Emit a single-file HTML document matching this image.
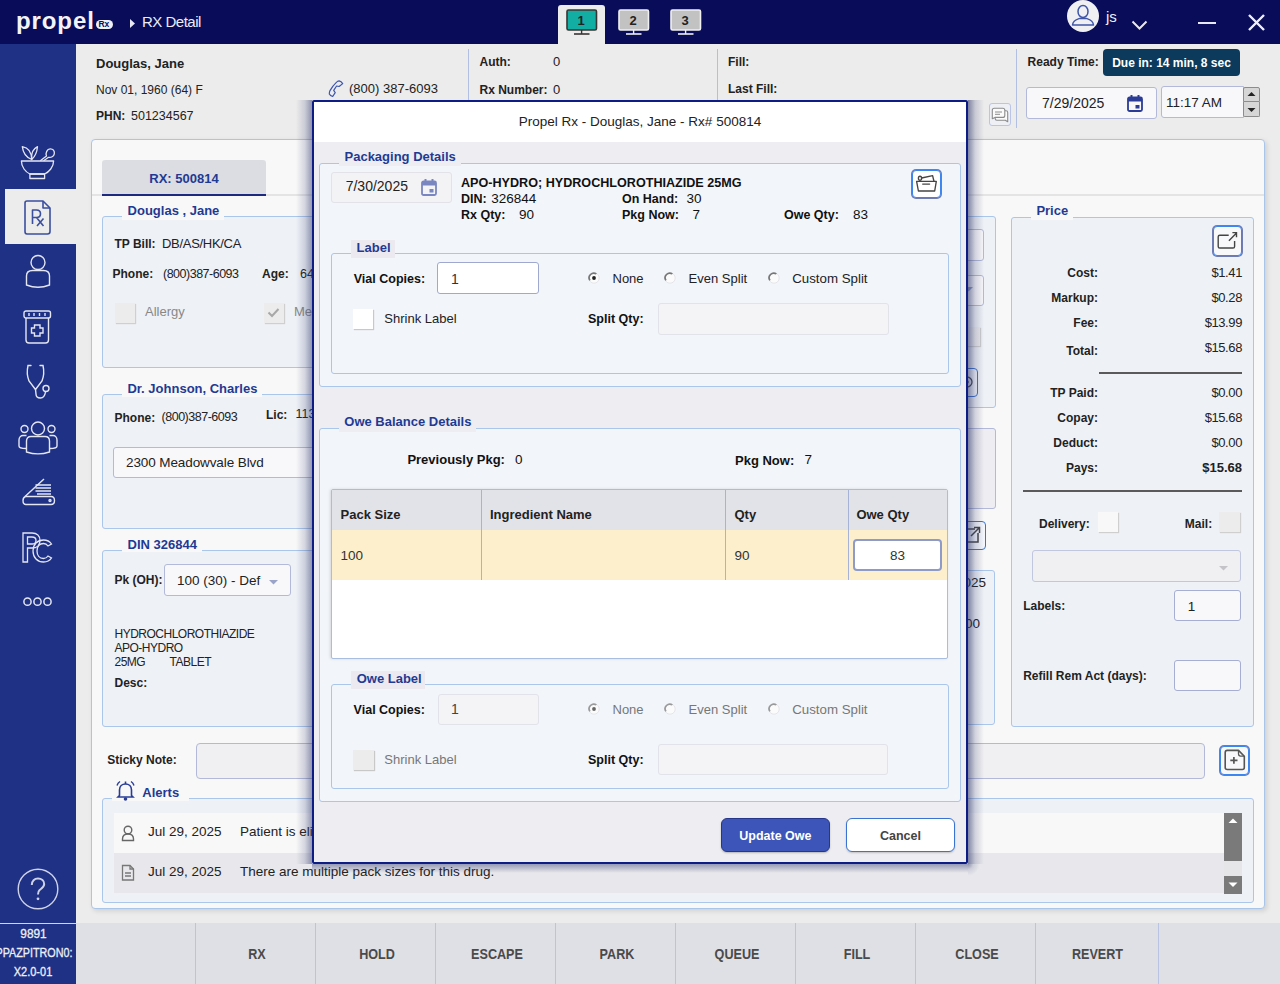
<!DOCTYPE html>
<html><head><meta charset="utf-8">
<style>
*{box-sizing:border-box;margin:0;padding:0}
html,body{width:1280px;height:984px;overflow:hidden;background:#ececec;font-family:"Liberation Sans",sans-serif;color:#222;font-size:13px;position:relative}
.a{position:absolute}
.t{position:absolute;white-space:nowrap;line-height:1}
svg{overflow:visible}
</style></head><body>
<div class="a" style="left:0px;top:0px;width:1280px;height:44px;background:#080c59"></div>
<div class="t" style="left:16px;top:8.5px;font-size:24px;font-weight:700;color:#f4f4f8;letter-spacing:0.9px;">propel</div>
<div class="a" style="left:96px;top:19.5px;width:17px;height:9.5px;background:#f0f0f4;border-radius:5px"></div>
<div class="t" style="left:98.5px;top:20.25px;font-size:8.5px;font-weight:700;color:#080c59;letter-spacing:-0.2px;">Rx</div>
<svg class="a" style="left:130px;top:19px;" width="6" height="9" viewBox="0 0 6 9"><path d="M0 0 L5 4.5 L0 9Z" fill="#e8e8f0"/></svg>
<div class="t" style="left:142px;top:14.2px;font-size:15px;color:#ececf2;letter-spacing:-0.5px;">RX Detail</div>
<div class="a" style="left:558px;top:5px;width:47px;height:39px;background:#ececec;border-radius:3px 3px 0 0"></div>
<svg class="a" style="left:566px;top:9px;" width="32" height="26" viewBox="0 0 32 26"><rect x="1" y="1" width="29.5" height="20" rx="1.5" fill="#12aea3" stroke="#3a3434" stroke-width="1.6"/><line x1="15.6" y1="21" x2="15.6" y2="25" stroke="#3a3434" stroke-width="1.4"/><line x1="8" y1="25" x2="23.5" y2="25" stroke="#3a3434" stroke-width="1.6"/></svg>
<div class="t" style="left:577.5px;top:13.5px;font-size:13px;font-weight:700;">1</div>
<svg class="a" style="left:618px;top:9px;" width="32" height="26" viewBox="0 0 32 26"><rect x="1" y="1" width="29.5" height="20" rx="1.5" fill="#c2c2c2" stroke="#f0f0f0" stroke-width="1.6"/><line x1="15.6" y1="21" x2="15.6" y2="25" stroke="#f0f0f0" stroke-width="1.4"/><line x1="8" y1="25" x2="23.5" y2="25" stroke="#f0f0f0" stroke-width="1.6"/></svg>
<div class="t" style="left:629.5px;top:13.5px;font-size:13px;font-weight:700;">2</div>
<svg class="a" style="left:670px;top:9px;" width="32" height="26" viewBox="0 0 32 26"><rect x="1" y="1" width="29.5" height="20" rx="1.5" fill="#c2c2c2" stroke="#f0f0f0" stroke-width="1.6"/><line x1="15.6" y1="21" x2="15.6" y2="25" stroke="#f0f0f0" stroke-width="1.4"/><line x1="8" y1="25" x2="23.5" y2="25" stroke="#f0f0f0" stroke-width="1.6"/></svg>
<div class="t" style="left:681.5px;top:13.5px;font-size:13px;font-weight:700;">3</div>
<svg class="a" style="left:1067px;top:0px;" width="32" height="32" viewBox="0 0 32 32"><circle cx="16" cy="16" r="16" fill="#f0f0f2"/><ellipse cx="16" cy="11.5" rx="5" ry="6" fill="none" stroke="#3e55a8" stroke-width="1.5"/><path d="M5.5 25 C6 20 11 19 12.5 18.5 L19.5 18.5 C21 19 26 20 26.5 25 Z" fill="none" stroke="#3e55a8" stroke-width="1.5" stroke-linejoin="round"/></svg>
<div class="t" style="left:1106px;top:8.5px;font-size:15px;color:#f0f0f4;">js</div>
<svg class="a" style="left:1131px;top:20px;" width="17" height="10" viewBox="0 0 17 10"><polyline points="1.5,1.5 8.5,8.5 15.5,1.5" fill="none" stroke="#e8e8f0" stroke-width="2"/></svg>
<div class="a" style="left:1198px;top:21.5px;width:18px;height:2.5px;background:#e8e8f0"></div>
<svg class="a" style="left:1248px;top:14px;" width="17" height="17" viewBox="0 0 17 17"><path d="M1 1 L16 16 M16 1 L1 16" stroke="#f0f0f4" stroke-width="2.4"/></svg>
<div class="a" style="left:0px;top:44px;width:76px;height:879px;background:#1f3185"></div>
<div class="a" style="left:5px;top:189px;width:71px;height:55px;background:#ececec"></div>
<svg class="a" style="left:20px;top:145px;" width="36" height="36" viewBox="0 0 36 36"><g fill="none" stroke="#e4e6f2" stroke-width="1.3" stroke-linejoin="round"><path d="M1.4 16 H33.6 C33.6 22 29 27 24.6 29 H9.9 C5.5 27 1.4 22 1.4 16Z"/><rect x="9.9" y="29" width="14.7" height="4.5"/><path d="M2.3 1.7 C7 2.5 11.5 6 11.7 14.5 C6 12.5 3 7.5 2.3 1.7Z"/><path d="M17.5 1.7 C17 7 15 11.5 11.7 14.5 C11 9 13 4 17.5 1.7Z"/><path d="M20.3 15.8 L26.5 11 C25.3 8 27 4 30.2 3.8 C33 3.7 34.8 6 34.3 8.8 C33.8 11.5 31 12.8 28.6 12.3 L23.6 15.8"/></g></svg>
<svg class="a" style="left:24px;top:200px;" width="28" height="36" viewBox="0 0 28 36"><g fill="none" stroke="#3b4f9e" stroke-width="1.6" stroke-linejoin="round"><path d="M3 1 H19 L26 8 V31.5 C26 33 25 34 23.5 34 H3 C1.8 34 1 33 1 31.5 V3 C1 1.8 1.8 1 3 1Z"/><path d="M19 1 V8 H26"/><path d="M8.5 24 V10 H12.5 C15 10 16.5 11.5 16.5 13.8 C16.5 16 15 17.5 12.5 17.5 H8.5 M12.5 17.5 L19.5 26 M19.5 18.5 L13 26"/></g></svg>
<svg class="a" style="left:25px;top:254px;" width="27" height="36" viewBox="0 0 27 36"><g fill="none" stroke="#e4e6f2" stroke-width="1.4"><circle cx="13" cy="8.5" r="7"/><path d="M1.5 31 V22 C1.5 18.5 4 16.5 7.5 16.5 H18.5 C22 16.5 24.5 18.5 24.5 22 V31 C17 34 9 34 1.5 31Z"/></g></svg>
<svg class="a" style="left:23px;top:310px;" width="30" height="35" viewBox="0 0 30 35"><g fill="none" stroke="#e4e6f2" stroke-width="1.4"><rect x="1" y="1" width="26.5" height="7" rx="2"/><path d="M6 3 V6 M11 3 V6 M16.5 3 V6 M22 3 V6"/><path d="M3 8 V30 C3 32 4 33 6 33 H22.5 C24.5 33 25.5 32 25.5 30 V8"/><path d="M11.5 15 H17 V18 H20 V23 H17 V26 H11.5 V23 H8.5 V18 H11.5Z"/></g></svg>
<svg class="a" style="left:25px;top:364px;" width="26" height="36" viewBox="0 0 26 36"><g fill="none" stroke="#e4e6f2" stroke-width="1.4" stroke-linecap="round"><path d="M6 1.5 H3 C2 6 2 12 4 17 L10.5 25.5 L17 17 C19 12 19 6 18 1.5 H15"/><path d="M10.5 25.5 L11 30 C11 33 13 34 15.5 34 C19 34 20 31 20.5 28"/><circle cx="21" cy="24.5" r="3"/></g></svg>
<svg class="a" style="left:18px;top:421px;" width="40" height="34" viewBox="0 0 40 34"><g fill="none" stroke="#e4e6f2" stroke-width="1.4"><circle cx="20" cy="7.5" r="6.5"/><circle cx="6.5" cy="8" r="3.5"/><circle cx="33.5" cy="8" r="3.5"/><path d="M8.5 31 V20 C8.5 17 10 15.5 13 15.5 H27 C30 15.5 31.5 17 31.5 20 V31 C24 33.5 16 33.5 8.5 31Z"/><path d="M8 27.5 C4 27.5 1 26.5 1 25 V19 C1 16 3 14.5 5 14.5 H8.5"/><path d="M32 27.5 C36 27.5 39 26.5 39 25 V19 C39 16 37 14.5 35 14.5 H31.5"/></g></svg>
<svg class="a" style="left:22px;top:478px;" width="34" height="29" viewBox="0 0 34 29"><g fill="none" stroke="#e4e6f2" stroke-width="1.4"><path d="M22 1 L3 18.5"/><path d="M3.5 18.5 H29 C31 18.5 32.5 20 32.5 22.5 C32.5 25 31 26.5 29 26.5 H4 C2 26.5 1 25 1 22.5 C1 20.5 2 19 3.5 18.5Z"/><path d="M13.5 10 H29 M13.5 13 H29 M15 16 H29 M13.5 7 H29"/><circle cx="28" cy="22.5" r="1" fill="{W}"/></g></svg>
<svg class="a" style="left:22px;top:532px;" width="31" height="31" viewBox="0 0 31 31"><g fill="none" stroke="#e4e6f2" stroke-width="1.3"><path d="M1 30 V1 H10 C15 1 18 4 18 8.5 C18 13 15 16 10 16 H5.5 V30 Z"/><path d="M5.5 5 H10 C12.5 5 14 6.5 14 8.5 C14 10.5 12.5 12 10 12 H5.5 Z"/><path d="M29.5 12 C27.5 9 24.5 8 21.5 8 C15.5 8 11 12.5 11 19 C11 25.5 15.5 30 21.5 30 C24.5 30 27.5 29 29.5 26 L26 24 C25 25.5 23.5 26.5 21.5 26.5 C17.5 26.5 15 23.5 15 19 C15 14.5 17.5 11.5 21.5 11.5 C23.5 11.5 25 12.5 26 14Z"/></g></svg>
<svg class="a" style="left:23px;top:597px;" width="30" height="10" viewBox="0 0 30 10"><g fill="none" stroke="#e4e6f2" stroke-width="1.5"><circle cx="4.5" cy="4.7" r="3.6"/><circle cx="14.5" cy="4.7" r="3.6"/><circle cx="24.5" cy="4.7" r="3.6"/></g></svg>
<svg class="a" style="left:17px;top:868px;" width="42" height="42" viewBox="0 0 42 42"><circle cx="21" cy="21" r="19.8" fill="none" stroke="#cdd2e8" stroke-width="1.4"/><path d="M14.8 17 C14.8 12.8 17.5 10.5 21 10.5 C24.5 10.5 27.2 12.8 27.2 16 C27.2 19.2 24.5 20.5 22.6 22 C21.4 23 21 24 21 26.5" fill="none" stroke="#cdd2e8" stroke-width="2"/><circle cx="21" cy="30.8" r="1.4" fill="#cdd2e8"/></svg>
<div class="a" style="left:0px;top:923px;width:76px;height:1px;background:#cfd4ea"></div>
<div class="a" style="left:0px;top:924px;width:76px;height:60px;background:#1f3185"></div>
<div class="t" style="left:0px;top:928.35px;font-size:12.5px;color:#eef0f8;width:67px;text-align:center;transform:scaleX(0.95);-webkit-text-stroke:0.3px #eef0f8;">9891</div>
<div class="t" style="left:-12px;top:946.75px;font-size:12.5px;color:#eef0f8;width:92px;text-align:center;transform:scaleX(0.86);-webkit-text-stroke:0.3px #eef0f8;">PPAZPITRON0:</div>
<div class="t" style="left:0px;top:965.75px;font-size:12.5px;color:#eef0f8;width:66px;text-align:center;transform:scaleX(0.88);-webkit-text-stroke:0.3px #eef0f8;">X2.0-01</div>
<div class="t" style="left:96px;top:57.400000000000006px;font-size:13px;font-weight:700;">Douglas, Jane</div>
<div class="t" style="left:96px;top:83.8px;font-size:12px;">Nov 01, 1960 (64) F</div>
<div class="t" style="left:96px;top:110.0px;font-size:12px;font-weight:700;">PHN:</div>
<div class="t" style="left:131px;top:109.75px;font-size:12.5px;">501234567</div>
<svg class="a" style="left:327px;top:80px;" width="18" height="18" viewBox="0 0 18 18"><path d="M12.1 0.9 C13.5 1.2 14.8 2.2 15.7 3.6 L12.1 6.5 L9.6 6 L6.7 10.4 L8.2 12.6 L5.7 16.5 C4.2 16 3 15.2 2.3 14 C2.3 12.5 2.6 11.5 3 10.6 C4.8 7.5 7 4.5 9.6 2.1 C10.3 1.4 11.2 1 12.1 0.9Z" fill="none" stroke="#3b55b0" stroke-width="1.2" stroke-linejoin="round"/></svg>
<div class="t" style="left:349px;top:82.0px;font-size:13px;">(800) 387-6093</div>
<div class="a" style="left:468px;top:49px;width:1px;height:79px;background:#b2bfe2"></div>
<div class="t" style="left:479.5px;top:56.3px;font-size:12px;font-weight:700;">Auth:</div>
<div class="t" style="left:553px;top:55.3px;font-size:13px;">0</div>
<div class="t" style="left:479.5px;top:84.0px;font-size:12px;font-weight:700;">Rx Number:</div>
<div class="t" style="left:553px;top:83.0px;font-size:13px;">0</div>
<div class="a" style="left:717px;top:49px;width:1px;height:79px;background:#b2bfe2"></div>
<div class="t" style="left:728px;top:56.3px;font-size:12px;font-weight:700;">Fill:</div>
<div class="t" style="left:728px;top:83.2px;font-size:12px;font-weight:700;">Last Fill:</div>
<div class="a" style="left:1016px;top:49px;width:1px;height:79px;background:#b2bfe2"></div>
<div class="a" style="left:989px;top:103px;width:22px;height:23px;background:#eef0f6;border:1px solid #b9c4e6;border-radius:3px"></div>
<svg class="a" style="left:989px;top:103px;" width="22" height="23" viewBox="0 0 22 23"><g fill="#fbfbfc" stroke="#8c8c8c" stroke-width="1.1" stroke-linejoin="round"><path d="M15.8 7.7 H17 C18 7.7 18.7 8.4 18.7 9.5 V18.8 L16.3 17.3 H7.8 C6.8 17.3 6.2 16.6 6.2 15.6 V14.4"/><path d="M5.3 5.2 H13.8 C15 5.2 15.8 6 15.8 7.2 V12.4 C15.8 13.6 15 14.4 13.8 14.4 H6 L3.3 15.8 V7.2 C3.3 6 4.1 5.2 5.3 5.2Z"/><path d="M6 9 H13 M6 11.3 H11" stroke-width="1"/></g></svg>
<div class="t" style="left:1027.6px;top:56.3px;font-size:12px;font-weight:700;">Ready Time:</div>
<div class="a" style="left:1103px;top:49px;width:137px;height:27px;background:#0b3a5c;border-radius:4px"></div>
<div class="t" style="left:1103px;top:56.7px;font-size:12px;font-weight:700;color:#fff;width:137px;text-align:center;">Due in: 14 min, 8 sec</div>
<div class="a" style="left:1026px;top:87px;width:131px;height:32px;background:#f8f8fa;border:1px solid #b3b9d8;border-radius:3px"></div>
<div class="t" style="left:1042px;top:95.7px;font-size:14px;">7/29/2025</div>
<svg class="a" style="left:1127px;top:95px;" width="16" height="17" viewBox="0 0 16 17"><rect x="1" y="2.5" width="14" height="13.5" rx="1.5" fill="none" stroke="#2a3c96" stroke-width="1.8"/><rect x="1" y="2.5" width="14" height="4" fill="#2a3c96"/><rect x="3.5" y="0" width="2" height="3" fill="#2a3c96"/><rect x="10.5" y="0" width="2" height="3" fill="#2a3c96"/><rect x="8.5" y="10" width="4" height="3.5" fill="#2a3c96"/></svg>
<div class="a" style="left:1161px;top:86px;width:83px;height:32px;background:#f8f8fa;border:1px solid #b3b9d8;border-radius:3px 0 0 3px"></div>
<div class="t" style="left:1166px;top:96.05px;font-size:13.5px;">11:17 AM</div>
<div class="a" style="left:1243px;top:87px;width:17px;height:15px;background:#d6d6d6;border:1px solid #8c8c8c;border-radius:2px 2px 0 0"></div>
<div class="a" style="left:1243px;top:102px;width:17px;height:15px;background:#d6d6d6;border:1px solid #8c8c8c;border-top:none;border-radius:0 0 2px 2px"></div>
<svg class="a" style="left:1247px;top:91px;" width="9" height="6" viewBox="0 0 9 6"><path d="M0.5 5 L4.5 1 L8.5 5Z" fill="#222"/></svg>
<svg class="a" style="left:1247px;top:107px;" width="9" height="6" viewBox="0 0 9 6"><path d="M0.5 1 L4.5 5 L8.5 1Z" fill="#222"/></svg>
<div class="a" style="left:91px;top:139px;width:1174px;height:770px;background:#f8f8f8;border:1px solid #a9c5ea;border-radius:4px;box-shadow:2px 2px 5px rgba(0,0,0,.12)"></div>
<div class="a" style="left:92px;top:194px;width:1172px;height:2px;background:#e4e4e4"></div>
<div class="a" style="left:102px;top:160px;width:164px;height:36px;background:#dcdde2;border-radius:3px 3px 0 0"></div>
<div class="a" style="left:102px;top:194px;width:164px;height:2px;background:#1c2b80"></div>
<div class="t" style="left:102px;top:172.0px;font-size:13px;font-weight:700;color:#1f3a93;width:164px;text-align:center;">RX: 500814</div>
<div class="a" style="left:102px;top:216px;width:600px;height:152px;background:#eef1f6;border:1px solid #aac6ea;border-radius:3px;"></div>
<div class="a" style="left:122px;top:205px;width:102px;height:15px;background:#f8f8f8"></div>
<div class="t" style="left:127.6px;top:204.0px;font-size:13px;font-weight:700;color:#1f3a93;">Douglas , Jane</div>
<div class="t" style="left:114.5px;top:238.0px;font-size:12px;font-weight:700;">TP Bill:</div>
<div class="t" style="left:162px;top:237.0px;font-size:13px;letter-spacing:-0.3px;">DB/AS/HK/CA</div>
<div class="t" style="left:112.5px;top:268.0px;font-size:12px;font-weight:700;">Phone:</div>
<div class="t" style="left:163px;top:267.75px;font-size:12.5px;letter-spacing:-0.5px;">(800)387-6093</div>
<div class="t" style="left:262px;top:268.0px;font-size:12px;font-weight:700;">Age:</div>
<div class="t" style="left:300px;top:267.75px;font-size:12.5px;">64</div>
<div class="a" style="left:114.5px;top:302.5px;width:20px;height:20px;background:#ececec;box-shadow:1px 1px 1px #cfcfcf"></div>
<div class="t" style="left:145px;top:305.0px;font-size:13px;color:#888;">Allergy</div>
<div class="a" style="left:263.5px;top:302.5px;width:20px;height:20px;background:#ececec;box-shadow:1px 1px 1px #cfcfcf"></div>
<svg class="a" style="left:267px;top:307px;" width="13" height="11" viewBox="0 0 13 11"><polyline points="1.5,5.5 5,9 11.5,2" fill="none" stroke="#a8a8a8" stroke-width="2"/></svg>
<div class="t" style="left:294px;top:305.0px;font-size:13px;color:#888;">Med</div>
<div class="a" style="left:102px;top:393.5px;width:600px;height:135px;background:#eef1f6;border:1px solid #aac6ea;border-radius:3px;"></div>
<div class="a" style="left:122px;top:380px;width:140px;height:17px;background:#f8f8f8"></div>
<div class="t" style="left:127.4px;top:382.0px;font-size:13px;font-weight:700;color:#1f3a93;">Dr. Johnson, Charles</div>
<div class="t" style="left:114.5px;top:411.7px;font-size:12px;font-weight:700;">Phone:</div>
<div class="t" style="left:161.6px;top:411.45px;font-size:12.5px;letter-spacing:-0.5px;">(800)387-6093</div>
<div class="t" style="left:266px;top:408.6px;font-size:12px;font-weight:700;">Lic:</div>
<div class="t" style="left:295.5px;top:408.35px;font-size:12.5px;">113</div>
<div class="a" style="left:113.4px;top:446.5px;width:500px;height:31px;background:#f8f8fa;border:1px solid #b3b9d8;border-radius:3px"></div>
<div class="t" style="left:126px;top:455.75px;font-size:13.5px;letter-spacing:-0.1px;">2300 Meadowvale Blvd</div>
<div class="a" style="left:102px;top:550px;width:600px;height:177px;background:#eef1f6;border:1px solid #aac6ea;border-radius:3px;"></div>
<div class="a" style="left:122px;top:536px;width:80px;height:16px;background:#f8f8f8"></div>
<div class="t" style="left:127.6px;top:538.2px;font-size:13px;font-weight:700;color:#1f3a93;">DIN 326844</div>
<div class="t" style="left:114.5px;top:574.4px;font-size:12px;font-weight:700;">Pk (OH):</div>
<div class="a" style="left:164.3px;top:564px;width:126.3px;height:31.5px;background:#f8f8fa;border:1px solid #b3b9d8;border-radius:3px"></div>
<div class="t" style="left:177px;top:574.25px;font-size:13.5px;width:84px;overflow:hidden;">100 (30) - Def</div>
<svg class="a" style="left:269px;top:580px;" width="10" height="6" viewBox="0 0 10 6"><path d="M0 0 L9 0 L4.5 4.5Z" fill="#9aa3c8"/></svg>
<div class="t" style="left:114.5px;top:627.7px;font-size:12px;letter-spacing:-0.5px;">HYDROCHLOROTHIAZIDE</div>
<div class="t" style="left:114.5px;top:641.6px;font-size:12px;letter-spacing:-0.5px;">APO-HYDRO</div>
<div class="t" style="left:114.5px;top:655.5px;font-size:12px;letter-spacing:-0.5px;">25MG</div>
<div class="t" style="left:169.6px;top:655.5px;font-size:12px;letter-spacing:-0.5px;">TABLET</div>
<div class="t" style="left:114.5px;top:676.8px;font-size:12px;font-weight:700;">Desc:</div>
<div class="a" style="left:700px;top:216px;width:295.5px;height:192px;background:#eef1f6;border:1px solid #aac6ea;border-radius:3px;"></div>
<div class="a" style="left:800px;top:229px;width:184px;height:31.5px;background:#f8f8fa;border:1px solid #b3b9d8;border-radius:3px"></div>
<div class="a" style="left:800px;top:274.5px;width:184px;height:31px;background:#f8f8fa;border:1px solid #b3b9d8;border-radius:3px"></div>
<svg class="a" style="left:964px;top:287px;" width="10" height="6" viewBox="0 0 10 6"><path d="M0 0 L9 0 L4.5 4.5Z" fill="#9aa3c8"/></svg>
<div class="a" style="left:900px;top:326.5px;width:79.5px;height:19px;background:#ececec;box-shadow:1px 1px 1px #cfcfcf"></div>
<div class="a" style="left:900px;top:368px;width:78px;height:29px;background:#f4f6fb;border:1.5px solid #3b74d0;border-radius:4px"></div>
<svg class="a" style="left:960px;top:374px;" width="14" height="16" viewBox="0 0 14 16"><circle cx="7" cy="8" r="5" fill="none" stroke="#444" stroke-width="1.3"/><circle cx="7" cy="8" r="1.8" fill="#444"/></svg>
<div class="a" style="left:700px;top:427.5px;width:296px;height:81.5px;background:#eeedf1;border:1px solid #b3b9d8;border-radius:3px"></div>
<div class="a" style="left:900px;top:520.5px;width:86px;height:29.5px;background:#f4f6fb;border:1.5px solid #3b74d0;border-radius:4px"></div>
<svg class="a" style="left:963px;top:526px;" width="18" height="18" viewBox="0 0 18 18"><path d="M12 3 H2 V16 H15 V7" fill="none" stroke="#444" stroke-width="1.5"/><path d="M8 10 L16 2 M11 1.5 H16.5 V7" fill="none" stroke="#444" stroke-width="1.5"/></svg>
<div class="a" style="left:700px;top:570px;width:295px;height:155px;background:#eef1f6;border:1px solid #aac6ea;border-radius:3px;"></div>
<div class="t" style="left:700px;top:576.45px;font-size:13.5px;left:auto;right:294px;">7/29/2025</div>
<div class="t" style="left:700px;top:616.75px;font-size:13.5px;left:auto;right:300px;">$0.00</div>
<div class="a" style="left:1011px;top:216.5px;width:242.5px;height:510.5px;background:#eef1f6;border:1px solid #aac6ea;border-radius:3px;"></div>
<div class="a" style="left:1031px;top:204px;width:42px;height:16px;background:#f8f8f8"></div>
<div class="t" style="left:1036.4px;top:204.2px;font-size:13px;font-weight:700;color:#1f3a93;">Price</div>
<div class="a" style="left:1213px;top:226px;width:29px;height:29.5px;background:#f8f8fa;border:1px solid #3d86f0;border-radius:4px;box-shadow:0 0 0 1px #6e7cb3"></div>
<svg class="a" style="left:1208px;top:220px;" width="40" height="40" viewBox="0 0 40 40"><g fill="none" stroke="#444" stroke-width="1.4"><path d="M20.7 15.2 H11.8 C10.9 15.2 10.2 15.9 10.2 16.8 V26.4 C10.2 27.3 10.9 28 11.8 28 H25 C25.9 28 26.6 27.3 26.6 26.4 V21.1"/><path d="M20.9 20.7 L28.3 13.2 M24.4 12.6 H28.5 V17.2"/></g></svg>
<div class="t" style="right:182px;top:267.0px;font-size:12px;font-weight:700;">Cost:</div>
<div class="t" style="right:38px;top:266.0px;font-size:13px;letter-spacing:-0.4px;">$1.41</div>
<div class="t" style="right:182px;top:292.0px;font-size:12px;font-weight:700;">Markup:</div>
<div class="t" style="right:38px;top:291.0px;font-size:13px;letter-spacing:-0.4px;">$0.28</div>
<div class="t" style="right:182px;top:317.0px;font-size:12px;font-weight:700;">Fee:</div>
<div class="t" style="right:38px;top:316.0px;font-size:13px;letter-spacing:-0.4px;">$13.99</div>
<div class="t" style="right:182px;top:345.0px;font-size:12px;font-weight:700;">Total:</div>
<div class="t" style="right:38px;top:341.3px;font-size:13px;letter-spacing:-0.4px;">$15.68</div>
<div class="a" style="left:1098.5px;top:372px;width:143.5px;height:2px;background:#5a5a5a"></div>
<div class="t" style="right:182px;top:387.0px;font-size:12px;font-weight:700;">TP Paid:</div>
<div class="t" style="right:38px;top:386.0px;font-size:13px;letter-spacing:-0.4px;">$0.00</div>
<div class="t" style="right:182px;top:412.0px;font-size:12px;font-weight:700;">Copay:</div>
<div class="t" style="right:38px;top:411.0px;font-size:13px;letter-spacing:-0.4px;">$15.68</div>
<div class="t" style="right:182px;top:437.0px;font-size:12px;font-weight:700;">Deduct:</div>
<div class="t" style="right:38px;top:436.0px;font-size:13px;letter-spacing:-0.4px;">$0.00</div>
<div class="t" style="right:182px;top:461.7px;font-size:12px;font-weight:700;">Pays:</div>
<div class="t" style="right:38px;top:460.7px;font-size:13px;font-weight:700;">$15.68</div>
<div class="a" style="left:1023.3px;top:490.2px;width:218.5px;height:2px;background:#5a5a5a"></div>
<div class="t" style="left:1039px;top:518.0px;font-size:12px;font-weight:700;">Delivery:</div>
<div class="a" style="left:1098.3px;top:512.3px;width:20px;height:20px;background:#f8f8f8;box-shadow:1px 1px 1px #cfcfcf"></div>
<div class="t" style="left:1184.8px;top:518.0px;font-size:12px;font-weight:700;">Mail:</div>
<div class="a" style="left:1219px;top:512.3px;width:20.5px;height:20px;background:#ececec;box-shadow:1px 1px 1px #cfcfcf"></div>
<div class="a" style="left:1032.4px;top:550.2px;width:208.3px;height:31.5px;background:#f0f0f2;border:1px solid #c2c7e0;border-radius:3px"></div>
<svg class="a" style="left:1219px;top:566px;" width="10" height="6" viewBox="0 0 10 6"><path d="M0 0 L9 0 L4.5 4.5Z" fill="#c4c4c8"/></svg>
<div class="t" style="left:1023.2px;top:600.0px;font-size:12px;font-weight:700;">Labels:</div>
<div class="a" style="left:1174.2px;top:590.2px;width:66.5px;height:31px;background:#f8f8fa;border:1px solid #a6aed2;border-radius:3px"></div>
<div class="t" style="left:1187.8px;top:599.75px;font-size:13.5px;">1</div>
<div class="t" style="left:1023.2px;top:670.2px;font-size:12px;font-weight:700;">Refill Rem Act (days):</div>
<div class="a" style="left:1174.2px;top:660.3px;width:66.5px;height:31px;background:#f8f8fa;border:1px solid #a6aed2;border-radius:3px"></div>
<div class="t" style="left:107.3px;top:754.0px;font-size:12px;font-weight:700;">Sticky Note:</div>
<div class="a" style="left:196.4px;top:742.5px;width:1009px;height:36.3px;background:#f0f0f2;border:1px solid #b3b9d8;border-radius:4px"></div>
<div class="a" style="left:1220px;top:746px;width:29px;height:29px;background:#f8f8fa;border:1px solid #3d86f0;border-radius:4px;box-shadow:0 0 0 1px #6e7cb3"></div>
<svg class="a" style="left:1214px;top:740px;" width="40" height="40" viewBox="0 0 40 40"><g fill="none" stroke="#555" stroke-width="1.6" stroke-linejoin="round"><path d="M13.3 10.4 H24.5 L30.3 16.2 V27.5 C30.3 28.6 29.4 29.5 28.3 29.5 H13.3 C12.2 29.5 11.2 28.6 11.2 27.5 V12.5 C11.2 11.3 12.2 10.4 13.3 10.4Z"/><path d="M24.5 10.4 V13.8 C24.5 15 25.5 16.2 26.6 16.2 H30.3" stroke-width="1.3"/><path d="M16.3 20.3 H23.5 M19.9 17 V23.8" stroke-width="1.7"/></g></svg>
<div class="a" style="left:102.3px;top:798px;width:1151.3px;height:104.5px;background:#eef1f6;border:1px solid #aac6ea;border-radius:3px;"></div>
<div class="a" style="left:112px;top:785px;width:76.6px;height:16px;background:#f8f8f8"></div>
<svg class="a" style="left:115px;top:780px;" width="21" height="21" viewBox="0 0 21 21"><g fill="none" stroke="#2a3c96" stroke-width="1.6"><path d="M4.5 15.5 V10 C4.5 6.5 7 4 10.5 4 C14 4 16.5 6.5 16.5 10 V15.5 L18 17 H3 Z"/><path d="M10.5 1.5 V4"/><path d="M2 5.5 C2.5 4 3.5 2.5 5 1.5 M19 5.5 C18.5 4 17.5 2.5 16 1.5" stroke-width="1.4"/></g><circle cx="10.5" cy="19" r="1.8" fill="#2a3c96"/></svg>
<div class="t" style="left:142.3px;top:786.0px;font-size:13px;font-weight:700;color:#1f3a93;">Alerts</div>
<div class="a" style="left:114px;top:813px;width:1110px;height:40px;background:#f8f8f8"></div>
<div class="a" style="left:114px;top:853px;width:1110px;height:40px;background:#e8e8ec"></div>
<svg class="a" style="left:121px;top:825px;" width="15" height="17" viewBox="0 0 15 17"><g fill="none" stroke="#666" stroke-width="1.4"><circle cx="7" cy="5" r="3.8"/><path d="M1.5 14 C1.5 10.5 3.5 9 7 9 C10.5 9 12.5 10.5 12.5 14 V15.5 H1.5Z"/></g></svg>
<svg class="a" style="left:121px;top:864px;" width="15" height="18" viewBox="0 0 15 18"><g fill="none" stroke="#777" stroke-width="1.3"><path d="M1.5 1.5 H9 L12.5 5 V16 H1.5Z"/><path d="M9 1.5 V5 H12.5"/><path d="M4 9 H10 M4 12 H10"/></g></svg>
<div class="t" style="left:148px;top:825.45px;font-size:13.5px;">Jul 29, 2025</div>
<div class="t" style="left:240px;top:825.45px;font-size:13.5px;">Patient is eligible for a medication review.</div>
<div class="t" style="left:148px;top:865.45px;font-size:13.5px;">Jul 29, 2025</div>
<div class="t" style="left:240px;top:865.45px;font-size:13.5px;">There are multiple pack sizes for this drug.</div>
<div class="a" style="left:1224px;top:813px;width:18px;height:48px;background:#7a7a7a"></div>
<div class="a" style="left:1224px;top:861px;width:18px;height:15px;background:#e6e6e8"></div>
<div class="a" style="left:1224px;top:876px;width:18px;height:18px;background:#7a7a7a"></div>
<svg class="a" style="left:1228px;top:818px;" width="10" height="6" viewBox="0 0 10 6"><path d="M0.5 5 L5 0.5 L9.5 5Z" fill="#fff"/></svg>
<svg class="a" style="left:1228px;top:882px;" width="10" height="6" viewBox="0 0 10 6"><path d="M0.5 0.5 L5 5 L9.5 0.5Z" fill="#fff"/></svg>
<div class="a" style="left:76px;top:923px;width:1204px;height:61px;background:#dfe0e5"></div>
<div class="a" style="left:195px;top:923px;width:1px;height:61px;background:#b9c3e3"></div>
<div class="a" style="left:315px;top:923px;width:1px;height:61px;background:#b9c3e3"></div>
<div class="a" style="left:435px;top:923px;width:1px;height:61px;background:#b9c3e3"></div>
<div class="a" style="left:555px;top:923px;width:1px;height:61px;background:#b9c3e3"></div>
<div class="a" style="left:675px;top:923px;width:1px;height:61px;background:#b9c3e3"></div>
<div class="a" style="left:795px;top:923px;width:1px;height:61px;background:#b9c3e3"></div>
<div class="a" style="left:915px;top:923px;width:1px;height:61px;background:#b9c3e3"></div>
<div class="a" style="left:1035px;top:923px;width:1px;height:61px;background:#b9c3e3"></div>
<div class="a" style="left:1158px;top:923px;width:1px;height:61px;background:#b9c3e3"></div>
<div class="t" style="left:197px;top:946.2px;font-size:15px;font-weight:700;color:#4a4a4a;width:120px;text-align:center;transform:scaleX(0.84);">RX</div>
<div class="t" style="left:317px;top:946.2px;font-size:15px;font-weight:700;color:#4a4a4a;width:120px;text-align:center;transform:scaleX(0.84);">HOLD</div>
<div class="t" style="left:437px;top:946.2px;font-size:15px;font-weight:700;color:#4a4a4a;width:120px;text-align:center;transform:scaleX(0.84);">ESCAPE</div>
<div class="t" style="left:557px;top:946.2px;font-size:15px;font-weight:700;color:#4a4a4a;width:120px;text-align:center;transform:scaleX(0.84);">PARK</div>
<div class="t" style="left:677px;top:946.2px;font-size:15px;font-weight:700;color:#4a4a4a;width:120px;text-align:center;transform:scaleX(0.84);">QUEUE</div>
<div class="t" style="left:797px;top:946.2px;font-size:15px;font-weight:700;color:#4a4a4a;width:120px;text-align:center;transform:scaleX(0.84);">FILL</div>
<div class="t" style="left:917px;top:946.2px;font-size:15px;font-weight:700;color:#4a4a4a;width:120px;text-align:center;transform:scaleX(0.84);">CLOSE</div>
<div class="t" style="left:1036px;top:946.2px;font-size:15px;font-weight:700;color:#4a4a4a;width:123px;text-align:center;transform:scaleX(0.84);">REVERT</div>
<div class="a" style="left:296px;top:100px;width:16px;height:764px;background:linear-gradient(to left,rgba(50,58,110,.5),rgba(50,58,110,.18) 45%,rgba(50,58,110,0))"></div>
<div class="a" style="left:968px;top:100px;width:16px;height:764px;background:linear-gradient(to right,rgba(50,58,110,.6),rgba(50,58,110,.2) 45%,rgba(50,58,110,0))"></div>
<div class="a" style="left:968px;top:864px;width:16px;height:12px;background:radial-gradient(circle 12px at 0 0,rgba(50,58,110,.5),rgba(50,58,110,.15) 45%,rgba(50,58,110,0) 100%)"></div>
<div class="a" style="left:312px;top:864px;width:656px;height:9px;background:linear-gradient(to bottom,rgba(50,58,110,.45),rgba(50,58,110,0))"></div>
<div class="a" style="left:312px;top:100px;width:656px;height:764px;background:#eeedf1;border:2px solid #0e1c86;border-radius:2px"></div>
<div class="a" style="left:314px;top:102px;width:652px;height:40px;background:#fff"></div>
<div class="t" style="left:314px;top:115.05px;font-size:13.5px;width:652px;text-align:center;">Propel Rx - Douglas, Jane - Rx# 500814</div>
<div class="a" style="left:319px;top:162.5px;width:642px;height:224px;background:#f2f5fa;border:1px solid #aac6ea;border-radius:3px;"></div>
<div class="a" style="left:339px;top:149.4px;width:122px;height:16.6px;background:#eeedf1"></div>
<div class="t" style="left:344.5px;top:150.0px;font-size:13px;font-weight:700;color:#1f3a93;">Packaging Details</div>
<div class="a" style="left:330.5px;top:171.5px;width:121.2px;height:31.3px;background:#f3f3f6;border:1px solid #e2e2e8;border-radius:3px"></div>
<div class="t" style="left:345.7px;top:179.4px;font-size:14px;">7/30/2025</div>
<svg class="a" style="left:421px;top:178.5px;" width="16" height="17" viewBox="0 0 16 17"><rect x="1" y="2.5" width="14" height="13.5" rx="1.5" fill="none" stroke="#7a86bf" stroke-width="1.8"/><rect x="1" y="2.5" width="14" height="4" fill="#7a86bf"/><rect x="3.5" y="0" width="2" height="3" fill="#7a86bf"/><rect x="10.5" y="0" width="2" height="3" fill="#7a86bf"/><rect x="8.5" y="10" width="4" height="3.5" fill="#7a86bf"/></svg>
<div class="t" style="left:461px;top:177.2px;font-size:12.6px;font-weight:700;color:#111;">APO-HYDRO; HYDROCHLOROTHIAZIDE 25MG</div>
<div class="t" style="left:461px;top:192.55px;font-size:12.5px;font-weight:700;color:#111;">DIN:</div>
<div class="t" style="left:491.3px;top:191.55px;font-size:13.5px;color:#111;">326844</div>
<div class="t" style="left:461px;top:209.25px;font-size:12.5px;font-weight:700;color:#111;">Rx Qty:</div>
<div class="t" style="left:519px;top:208.25px;font-size:13.5px;color:#111;">90</div>
<div class="t" style="left:622px;top:192.55px;font-size:12.5px;font-weight:700;color:#111;">On Hand:</div>
<div class="t" style="left:686.4px;top:191.55px;font-size:13.5px;color:#111;">30</div>
<div class="t" style="left:622px;top:209.25px;font-size:12.5px;font-weight:700;color:#111;">Pkg Now:</div>
<div class="t" style="left:692.5px;top:208.25px;font-size:13.5px;color:#111;">7</div>
<div class="t" style="left:784px;top:209.25px;font-size:12.5px;font-weight:700;color:#111;">Owe Qty:</div>
<div class="t" style="left:853px;top:208.25px;font-size:13.5px;color:#111;">83</div>
<div class="a" style="left:912px;top:169.5px;width:29px;height:28px;background:#fff;border:1px solid #3d86f0;border-radius:4px;box-shadow:0 0 0 1px #6e7cb3"></div>
<svg class="a" style="left:915px;top:173px;" width="22" height="20" viewBox="0 0 22 20"><g fill="none" stroke="#444" stroke-width="1.35" stroke-linejoin="round" stroke-linecap="round"><path d="M1.6 8.3 H21.3 L19.7 18 H3.4 Z"/><path d="M7.7 11.1 H14.6"/><ellipse cx="5" cy="5.3" rx="1.6" ry="2.1"/><path d="M6.6 5 L17.6 2.6 L18.9 8"/></g></svg>
<div class="a" style="left:331.25px;top:253.4px;width:617.25px;height:121px;background:#f2f5fa;border:1px solid #aac6ea;border-radius:3px;"></div>
<div class="a" style="left:351px;top:240.3px;width:44px;height:17.5px;background:#eceaf0"></div>
<div class="t" style="left:356.6px;top:241.0px;font-size:13px;font-weight:700;color:#1f3a93;">Label</div>
<div class="t" style="left:353.75px;top:272.75px;font-size:12.5px;font-weight:700;color:#111;">Vial Copies:</div>
<div class="a" style="left:437px;top:262.25px;width:101.8px;height:31.5px;background:#fff;border:1px solid #9fa9cf;border-radius:3px"></div>
<div class="t" style="left:451px;top:271.5px;font-size:14px;color:#333;">1</div>
<div class="a" style="left:353.2px;top:309px;width:20.2px;height:20px;background:#fff;box-shadow:1px 1px 1px #c8c8c8"></div>
<div class="t" style="left:384.3px;top:311.8px;font-size:13px;">Shrink Label</div>
<svg class="a" style="left:587.5px;top:272px;" width="12" height="12" viewBox="0 0 12 12"><circle cx="6" cy="6" r="5.2" fill="#fbfbfb" stroke="#e2e2e6" stroke-width="0.9"/><path d="M1.9 8.4 A4.7 4.7 0 0 1 8.4 1.9" fill="none" stroke="#777" stroke-width="1.7"/><circle cx="6" cy="6" r="1.9" fill="#222"/></svg>
<svg class="a" style="left:663.5px;top:272px;" width="12" height="12" viewBox="0 0 12 12"><circle cx="6" cy="6" r="5.2" fill="#fbfbfb" stroke="#e2e2e6" stroke-width="0.9"/><path d="M1.9 8.4 A4.7 4.7 0 0 1 8.4 1.9" fill="none" stroke="#777" stroke-width="1.7"/></svg>
<svg class="a" style="left:767.5px;top:272px;" width="12" height="12" viewBox="0 0 12 12"><circle cx="6" cy="6" r="5.2" fill="#fbfbfb" stroke="#e2e2e6" stroke-width="0.9"/><path d="M1.9 8.4 A4.7 4.7 0 0 1 8.4 1.9" fill="none" stroke="#777" stroke-width="1.7"/></svg>
<div class="t" style="left:612.5px;top:272.0px;font-size:13px;">None</div>
<div class="t" style="left:688.6px;top:272.0px;font-size:13px;">Even Split</div>
<div class="t" style="left:792.2px;top:271.85px;font-size:13.3px;">Custom Split</div>
<div class="t" style="left:588px;top:313.25px;font-size:12.5px;font-weight:700;color:#111;">Split Qty:</div>
<div class="a" style="left:657.6px;top:303.4px;width:231.3px;height:31.2px;background:#f4f4f7;border:1px solid #e2e2ea;border-radius:3px"></div>
<div class="a" style="left:319px;top:427.5px;width:642px;height:374px;background:#f2f5fa;border:1px solid #aac6ea;border-radius:3px;"></div>
<div class="a" style="left:339px;top:414px;width:137px;height:18px;background:#eeedf1"></div>
<div class="t" style="left:344.3px;top:415.0px;font-size:13px;font-weight:700;color:#1f3a93;">Owe Balance Details</div>
<div class="t" style="left:407.4px;top:452.7px;font-size:13px;font-weight:700;color:#111;">Previously Pkg:</div>
<div class="t" style="left:515px;top:452.75px;font-size:13.5px;color:#111;">0</div>
<div class="t" style="left:735px;top:453.5px;font-size:13px;font-weight:700;color:#111;">Pkg Now:</div>
<div class="t" style="left:804.6px;top:453.25px;font-size:13.5px;color:#111;">7</div>
<div class="a" style="left:331px;top:488.5px;width:617px;height:170.5px;background:#fff;border:1px solid #a8bde0;border-radius:2px;box-shadow:-1px 0 3px rgba(0,0,0,.12)"></div>
<div class="a" style="left:332px;top:489.5px;width:615px;height:40.5px;background:#e2e3e8"></div>
<div class="a" style="left:332px;top:530px;width:615px;height:50px;background:#fdefcb"></div>
<div class="a" style="left:481.3px;top:489.5px;width:1px;height:90.5px;background:#a7b3d6"></div>
<div class="a" style="left:725.4px;top:489.5px;width:1px;height:90.5px;background:#a7b3d6"></div>
<div class="a" style="left:847.7px;top:489.5px;width:1px;height:90.5px;background:#a7b3d6"></div>
<div class="t" style="left:340.5px;top:508.0px;font-size:13px;font-weight:700;">Pack Size</div>
<div class="t" style="left:490px;top:508.0px;font-size:13px;font-weight:700;">Ingredient Name</div>
<div class="t" style="left:734.5px;top:508.0px;font-size:13px;font-weight:700;">Qty</div>
<div class="t" style="left:856.4px;top:508.0px;font-size:13px;font-weight:700;">Owe Qty</div>
<div class="t" style="left:340.5px;top:549.35px;font-size:13.5px;color:#333;">100</div>
<div class="t" style="left:734.5px;top:549.35px;font-size:13.5px;color:#333;">90</div>
<div class="a" style="left:852.8px;top:538.9px;width:89.5px;height:32.5px;background:#fff;border:2px solid #8e9bc9;border-radius:4px"></div>
<div class="t" style="left:890px;top:549.35px;font-size:13.5px;color:#333;">83</div>
<div class="a" style="left:331px;top:684.3px;width:617.5px;height:105px;background:#f2f5fa;border:1px solid #aac6ea;border-radius:3px;"></div>
<div class="a" style="left:351px;top:671px;width:74px;height:18px;background:#eceaf0"></div>
<div class="t" style="left:356.7px;top:672.0px;font-size:13px;font-weight:700;color:#1f3a93;">Owe Label</div>
<div class="t" style="left:353.6px;top:703.55px;font-size:12.5px;font-weight:700;color:#111;">Vial Copies:</div>
<div class="a" style="left:437.6px;top:693.5px;width:101px;height:31px;background:#f4f4f7;border:1px solid #e2e2ea;border-radius:3px"></div>
<div class="t" style="left:451px;top:702.3px;font-size:14px;color:#444;">1</div>
<svg class="a" style="left:587.5px;top:703px;" width="12" height="12" viewBox="0 0 12 12"><circle cx="6" cy="6" r="5.2" fill="#fbfbfb" stroke="#e2e2e6" stroke-width="0.9"/><path d="M1.9 8.4 A4.7 4.7 0 0 1 8.4 1.9" fill="none" stroke="#9a9a9a" stroke-width="1.7"/><circle cx="6" cy="6" r="1.9" fill="#666"/></svg>
<svg class="a" style="left:663.5px;top:703px;" width="12" height="12" viewBox="0 0 12 12"><circle cx="6" cy="6" r="5.2" fill="#fbfbfb" stroke="#e2e2e6" stroke-width="0.9"/><path d="M1.9 8.4 A4.7 4.7 0 0 1 8.4 1.9" fill="none" stroke="#9a9a9a" stroke-width="1.7"/></svg>
<svg class="a" style="left:767.5px;top:703px;" width="12" height="12" viewBox="0 0 12 12"><circle cx="6" cy="6" r="5.2" fill="#fbfbfb" stroke="#e2e2e6" stroke-width="0.9"/><path d="M1.9 8.4 A4.7 4.7 0 0 1 8.4 1.9" fill="none" stroke="#9a9a9a" stroke-width="1.7"/></svg>
<div class="t" style="left:612.5px;top:702.7px;font-size:13px;color:#777;">None</div>
<div class="t" style="left:688.6px;top:702.7px;font-size:13px;color:#777;">Even Split</div>
<div class="t" style="left:792.2px;top:702.5500000000001px;font-size:13.3px;color:#777;">Custom Split</div>
<div class="a" style="left:353.2px;top:750.4px;width:20.8px;height:20px;background:#ececec;box-shadow:1px 1px 1px #c8c8c8"></div>
<div class="t" style="left:384.3px;top:752.6px;font-size:13px;color:#777;">Shrink Label</div>
<div class="t" style="left:588px;top:753.75px;font-size:12.5px;font-weight:700;color:#111;">Split Qty:</div>
<div class="a" style="left:657.6px;top:744.3px;width:230.8px;height:31px;background:#f4f4f7;border:1px solid #e2e2ea;border-radius:3px"></div>
<div class="a" style="left:721px;top:818.2px;width:108.7px;height:34.3px;background:#3d55b8;border:1px solid #26378a;border-radius:6px;box-shadow:0 1px 2px rgba(0,0,0,.25)"></div>
<div class="t" style="left:721px;top:830.05px;font-size:12.5px;font-weight:700;color:#fff;width:108.7px;text-align:center;">Update Owe</div>
<div class="a" style="left:846.2px;top:818.2px;width:108.6px;height:34.3px;background:#fff;border:1.5px solid #3a73d0;border-radius:6px;box-shadow:0 1px 2px rgba(0,0,0,.2)"></div>
<div class="t" style="left:846.2px;top:830.05px;font-size:12.5px;font-weight:700;color:#444;width:108.6px;text-align:center;">Cancel</div>
</body></html>
